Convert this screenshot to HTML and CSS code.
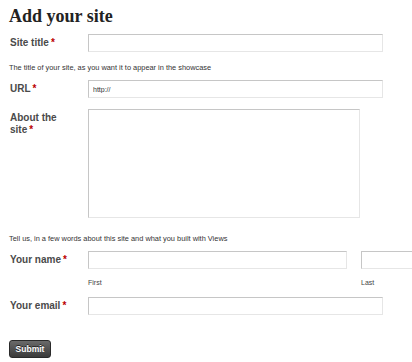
FILE: index.html
```html
<!DOCTYPE html>
<html lang="en">
<head>
  <meta charset="UTF-8">
  <title>Add your site</title>
  <link rel="stylesheet" href="styles.css">
</head>
<body>

  <div class="page">
    <h1>Add your site</h1>

    <form class="site-form">
      <div class="form-item">
        <label for="title">Site title<span class="req">*</span></label>
        <input type="text" id="title" class="text-wide">
      </div>
      <p class="description">The title of your site, as you want it to appear in the showcase</p>

      <div class="form-item">
        <label for="url">URL<span class="req">*</span></label>
        <input type="text" id="url" class="text-wide url" value="http://">
      </div>

      <div class="form-item">
        <label for="about">About the site<span class="req">*</span></label>
        <textarea id="about"></textarea>
      </div>
      <p class="description">Tell us, in a few words about this site and what you built with Views</p>

      <div class="form-item">
        <label for="first">Your name<span class="req">*</span></label>
        <div class="name-parts">
          <div class="name-part">
            <input type="text" id="first" class="text-first">
            <span class="sub">First</span>
          </div>
          <div class="name-part">
            <input type="text" id="last" class="text-last">
            <span class="sub">Last</span>
          </div>
        </div>
      </div>

      <div class="form-item">
        <label for="email">Your email<span class="req">*</span></label>
        <input type="text" id="email" class="text-wide">
      </div>

      <button type="button" class="submit">Submit</button>
    </form>
  </div>

</body>
</html>
```

FILE: styles.css
```css
body {
  margin: 0;
  background-color: #fff;
  color: #444;
  font-family: 'Liberation Sans', Arial, sans-serif;
  overflow: hidden;
}

.page {
  padding: 6px 0 0 9px;
}

h1 {
  margin: 0;
  font-family: 'Liberation Serif', 'Times New Roman', serif;
  font-size: 18px;
  font-weight: bold;
  color: #222;
  line-height: 20px;
}

.site-form {
  margin-top: 8px;
}

.form-item {
  display: flex;
  align-items: flex-start;
}

.form-item label {
  width: 79px;
  flex-shrink: 0;
  padding: 3px 12px 0 1px;
  font-size: 10px;
  font-weight: bold;
  line-height: 12px;
  color: #4a4a4a;
  box-sizing: border-box;
}

.req {
  margin-left: 2px;
  color: #b00;
}

input, textarea {
  margin: 0;
  padding: 0 3px;
  border: 1px solid;
  border-color: #c6c6c6 #e6e6e6 #e6e6e6 #c6c6c6;
  background: #fff;
  box-sizing: border-box;
  font-family: 'Liberation Sans', Arial, sans-serif;
  font-size: 7px;
  color: #333;
  height: 18px;
}

.text-wide {
  width: 295px;
}

.url {
  padding-left: 4px;
}

textarea {
  width: 272px;
  height: 109px;
  resize: none;
  margin-bottom: 16px;
}

.description {
  margin: 11px 0 7px;
  font-size: 7.4px;
  line-height: 10px;
  color: #333;
}

.form-item + .form-item {
  margin-top: 11px;
}

.description + .form-item {
  margin-top: 0;
}

.form-item:has(textarea) + .description {
  margin-top: 0;
}

.name-parts {
  display: flex;
  gap: 14px;
}

.name-part {
  display: flex;
  flex-direction: column;
}

.text-first {
  width: 259px;
}

.text-last {
  width: 51px;
  border-right: none;
}

.sub {
  margin-top: 9px;
  font-size: 7px;
  line-height: 10px;
  color: #444;
}

.form-item:has(.name-parts) + .form-item {
  margin-top: 9px;
}

.submit {
  display: block;
  margin-top: 25px;
  width: 42px;
  height: 18px;
  padding: 0;
  border: 1px solid #2a2a2a;
  border-radius: 3px;
  background: linear-gradient(#6a6a6a, #3a3a3a);
  color: #fff;
  font-family: 'Liberation Sans', Arial, sans-serif;
  font-size: 8.5px;
  font-weight: bold;
  text-shadow: 0 -1px 0 #222;
  cursor: pointer;
}
```
